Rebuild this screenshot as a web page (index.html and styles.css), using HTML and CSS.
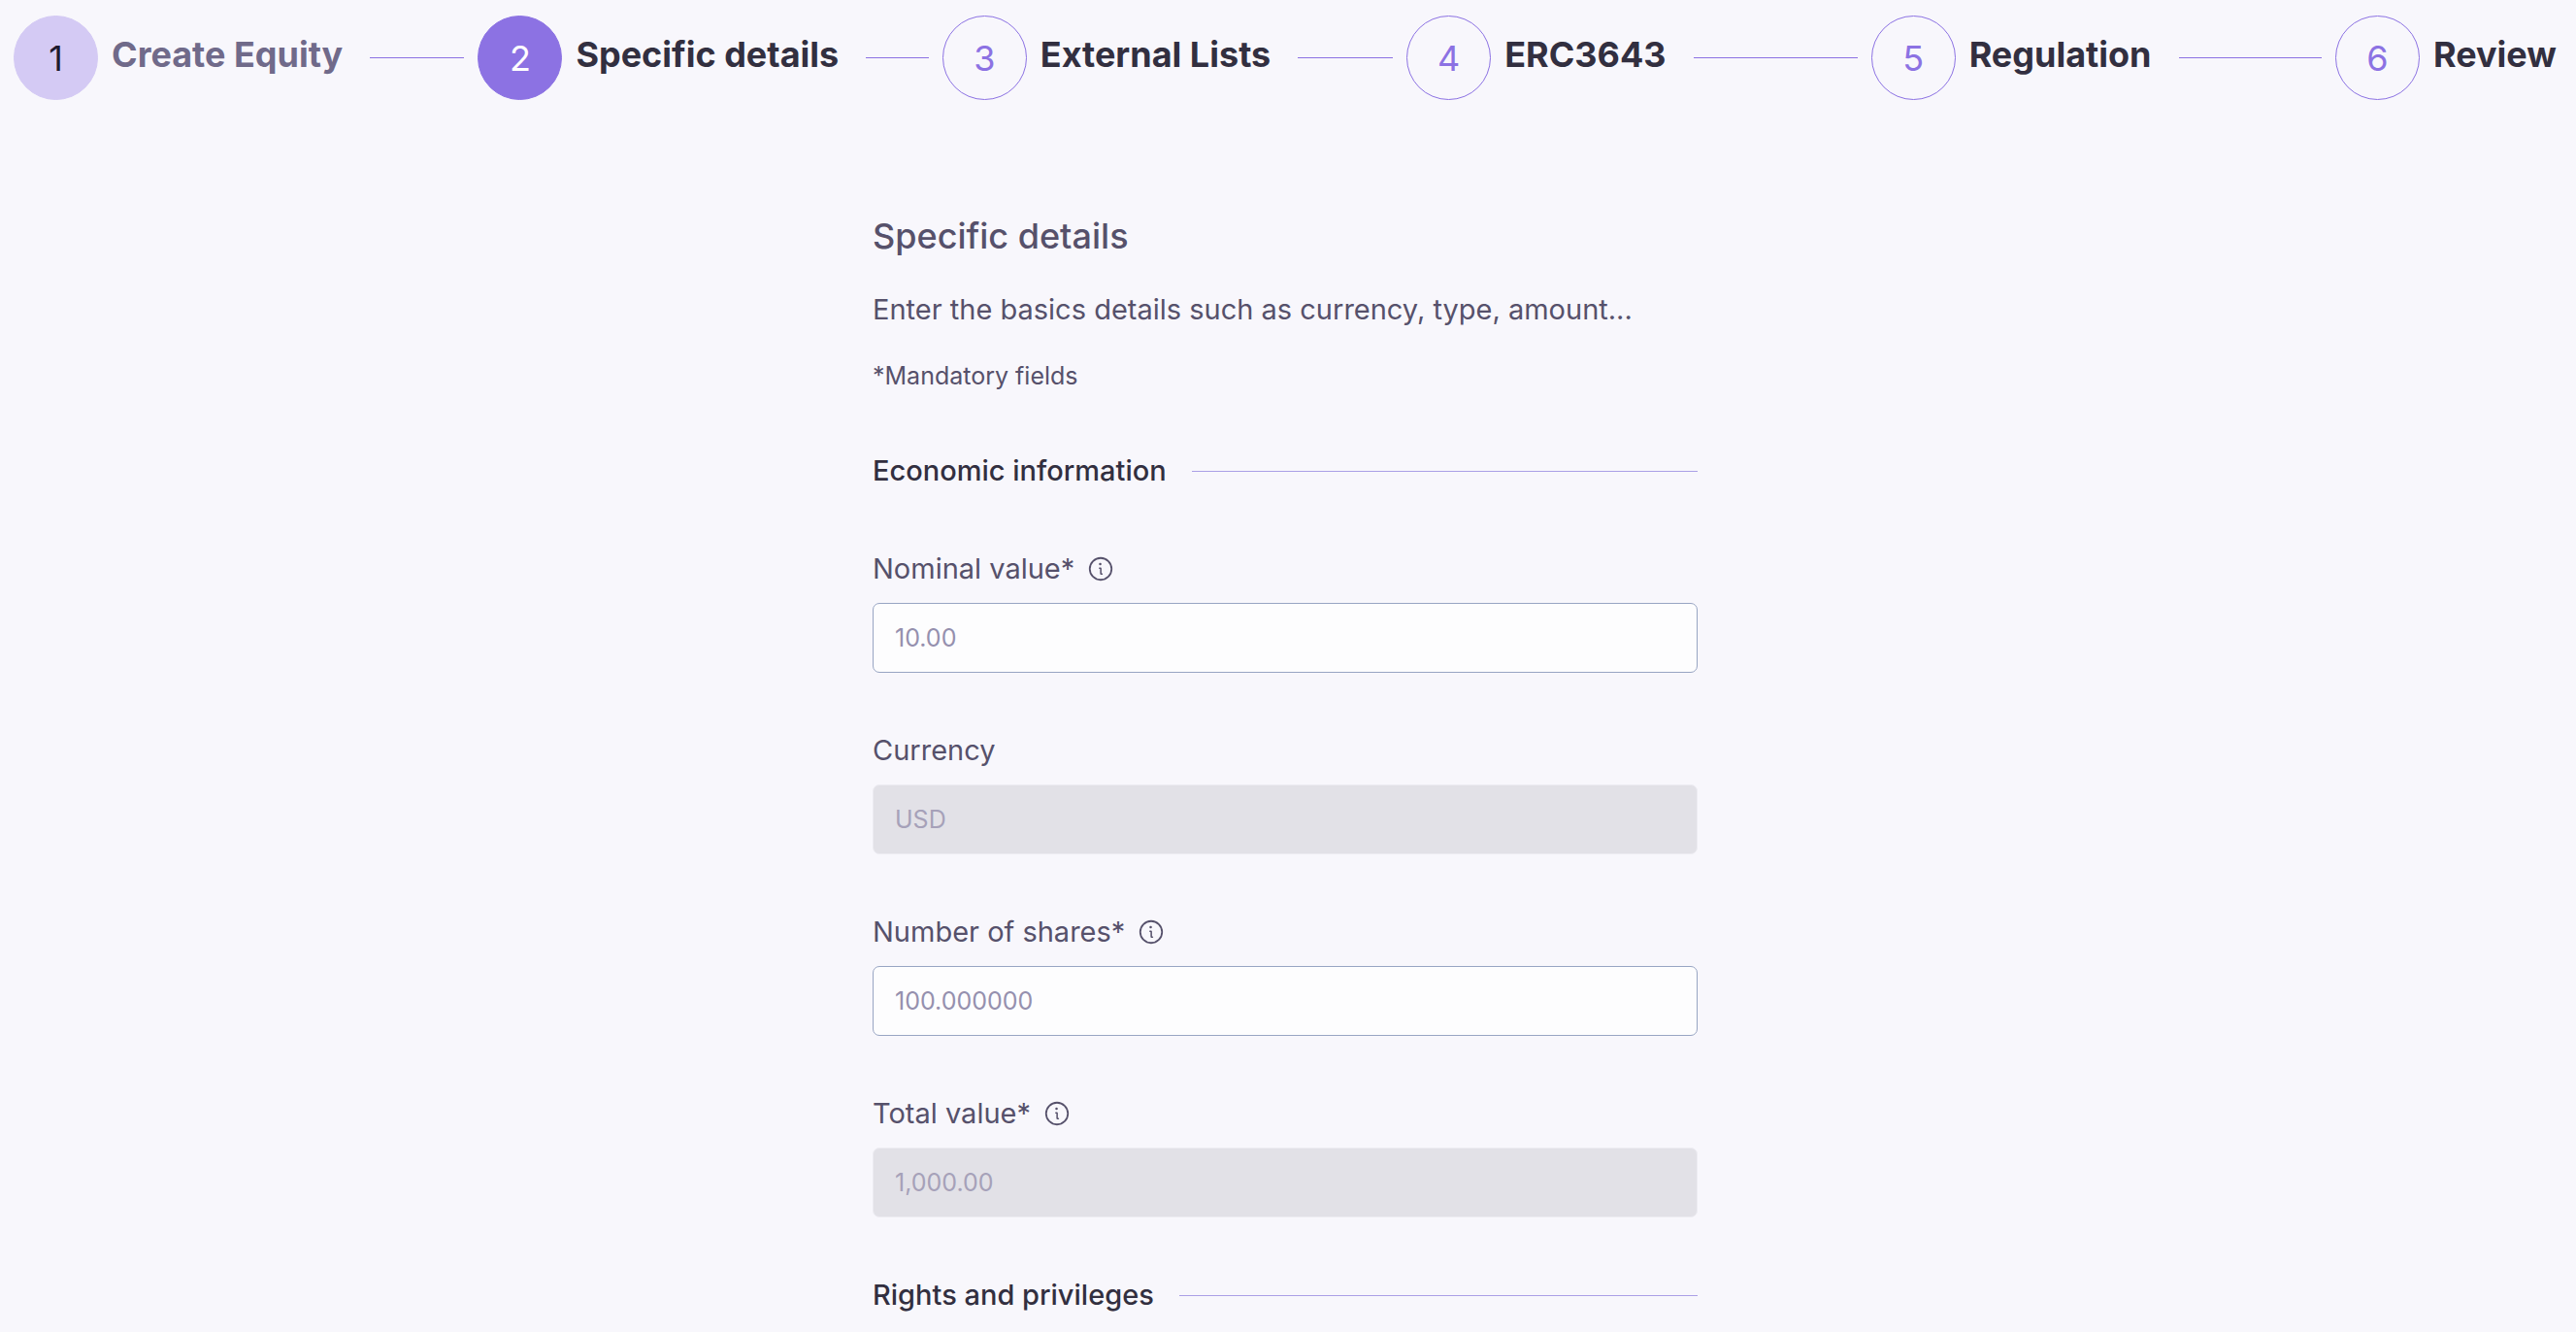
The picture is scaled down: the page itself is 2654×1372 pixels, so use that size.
FILE: index.html
```html
<!DOCTYPE html>
<html lang="en">
<head>
<meta charset="utf-8">
<title>Create Equity</title>
<link rel="stylesheet" href="styles.css">
</head>
<body>
<svg class="sprite" aria-hidden="true">
  <symbol id="info" viewBox="0 0 256 256">
    <circle cx="128" cy="128" r="96" fill="none" stroke="currentColor" stroke-width="15"/>
    <path d="M118 121h8a3 3 0 0 1 3 3v44a4 4 0 0 0 4 4h7" fill="none" stroke="currentColor" stroke-width="13" stroke-linecap="round"/>
    <circle cx="124" cy="86" r="11" fill="currentColor"/>
  </symbol>
</svg>
<ol class="stepper">
  <li class="step done"><span class="circle">1</span><span class="name">Create Equity</span></li>
  <li class="step active" aria-current="step"><span class="circle">2</span><span class="name">Specific details</span></li>
  <li class="step"><span class="circle">3</span><span class="name">External Lists</span></li>
  <li class="step"><span class="circle">4</span><span class="name">ERC3643</span></li>
  <li class="step"><span class="circle">5</span><span class="name">Regulation</span></li>
  <li class="step"><span class="circle">6</span><span class="name">Review</span></li>
</ol>
<main class="content">
  <header class="intro">
    <h1>Specific details</h1>
    <p class="lead">Enter the basics details such as currency, type, amount...</p>
    <p class="note">*Mandatory fields</p>
  </header>
  <form class="form">
    <h2 class="section">Economic information</h2>
    <div class="field">
      <div class="label"><label for="nominal">Nominal value*</label><svg class="info"><use href="#info"/></svg></div>
      <input id="nominal" type="text" placeholder="10.00">
    </div>
    <div class="field">
      <div class="label"><label for="currency">Currency</label></div>
      <input id="currency" type="text" placeholder="USD" disabled>
    </div>
    <div class="field">
      <div class="label"><label for="shares">Number of shares*</label><svg class="info"><use href="#info"/></svg></div>
      <input id="shares" type="text" placeholder="100.000000">
    </div>
    <div class="field">
      <div class="label"><label for="total">Total value*</label><svg class="info"><use href="#info"/></svg></div>
      <input id="total" type="text" placeholder="1,000.00" disabled>
    </div>
    <h2 class="section">Rights and privileges</h2>
  </form>
</main>
</body>
</html>
```
FILE: styles.css
```css
* { box-sizing: border-box; margin: 0; }

body {
  padding: 16px 6px 16px 0;
  background: #f8f7fc;
  color: #56516b;
  font-family: Inter, "Liberation Sans", sans-serif;
}

.sprite { display: none; }

.stepper {
  display: flex;
  gap: 14px;
  padding: 0 8px 0 14px;
  list-style: none;
}

.step {
  display: flex;
  flex: 1 1 0;
  align-items: center;
  font-size: 36px;
  line-height: 48px;
}

.step:last-child { flex: none; width: 234px; }

.circle {
  display: flex;
  flex: none;
  align-items: center;
  justify-content: center;
  width: 87px;
  height: 87px;
  border: 1px solid #8c72e3;
  border-radius: 50%;
  color: #8c72e3;
}

.name {
  padding: 0 0 7px 14px;
  color: #322f40;
  font-weight: 700;
  white-space: nowrap;
}

.step:not(:last-child)::after {
  content: "";
  flex: 1;
  height: 1px;
  margin-left: 28px;
  background: #8c72e3;
}

.done .circle { border-color: #d4caf4; background: #d4caf4; color: #1f1b2e; }
.done .name { color: #706a8a; }
.active .circle { background: #8c72e3; color: #fff; }

.content {
  width: 850px;
  max-width: 100%;
  margin: 116px auto 0;
}

h1 {
  margin-bottom: 31px;
  font-size: 36px;
  font-weight: 500;
  line-height: 48px;
}

.lead {
  margin-bottom: 29px;
  font-size: 29px;
  line-height: 42px;
}

.note {
  margin-bottom: 59px;
  font-size: 25px;
  line-height: 36px;
}

.form {
  display: flex;
  flex-direction: column;
  gap: 59px;
}

.section {
  display: flex;
  align-items: center;
  gap: 26px;
  color: #322f40;
  font-size: 29px;
  font-weight: 500;
  line-height: 42px;
}

.section::after {
  content: "";
  flex: 1;
  height: 1px;
  background: #aba0e6;
}

.field {
  display: flex;
  flex-direction: column;
  gap: 14px;
}

.label {
  display: flex;
  align-items: center;
  gap: 12px;
  font-size: 29px;
  line-height: 42px;
}

.info { width: 30px; height: 30px; }

input {
  width: 100%;
  height: 72px;
  padding: 0 22px;
  border: 1px solid #98a5c3;
  border-radius: 7px;
  background: #fdfdfe;
  color: #322f40;
  font: 25px Inter, "Liberation Sans", sans-serif;
}

input::placeholder { color: #9590ae; opacity: 1; }
input:disabled { border-color: #edecf2; background: #e2e1e7; }
input:disabled::placeholder { color: #a6a1b9; }
```
